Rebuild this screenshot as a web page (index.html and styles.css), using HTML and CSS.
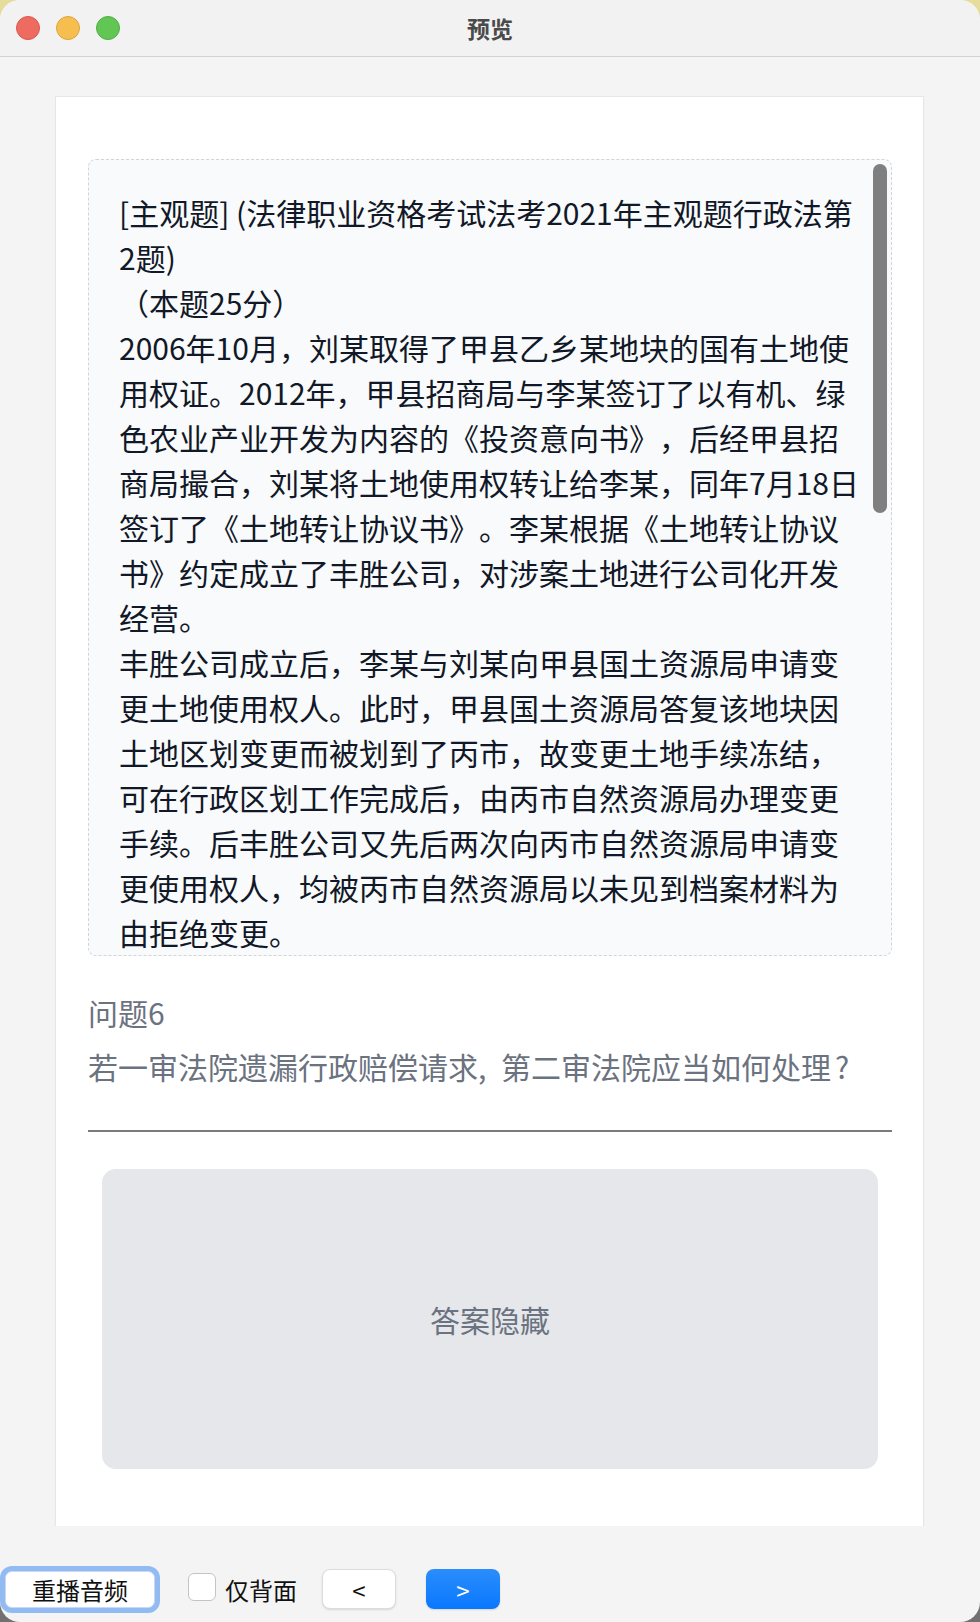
FILE: index.html
```html
<!DOCTYPE html>
<html lang="zh-CN">
<head>
<meta charset="utf-8">
<title>预览</title>
<link rel="stylesheet" href="styles.css">
</head>
<body>
<div class="window">
  <header class="titlebar">
    <div class="lights">
      <span class="light red"></span>
      <span class="light yellow"></span>
      <span class="light green"></span>
    </div>
    <div class="title">预览</div>
  </header>

  <main class="viewport">
    <article class="card">
      <section class="passage">
        <p>[主观题] (法律职业资格考试法考2021年主观题行政法第2题)</p>
        <p>（本题25分）</p>
        <p>2006年10月，刘某取得了甲县乙乡某地块的国有土地使用权证。2012年，甲县招商局与李某签订了以有机、绿色农业产业开发为内容的《投资意向书》，后经甲县招商局撮合，刘某将土地使用权转让给李某，同年7月18日签订了《土地转让协议书》。李某根据《土地转让协议书》约定成立了丰胜公司，对涉案土地进行公司化开发经营。</p>
        <p>丰胜公司成立后，李某与刘某向甲县国土资源局申请变更土地使用权人。此时，甲县国土资源局答复该地块因土地区划变更而被划到了丙市，故变更土地手续冻结，可在行政区划工作完成后，由丙市自然资源局办理变更手续。后丰胜公司又先后两次向丙市自然资源局申请变更使用权人，均被丙市自然资源局以未见到档案材料为由拒绝变更。</p>
        <div class="scroll-thumb"></div>
      </section>

      <section class="question">
        <div class="q-label">问题6</div>
        <div class="q-text">若一审法院遗漏行政赔偿请求<span class="q-punct">, </span>第二审法院应当如何处理<span class="q-mark">?</span></div>
      </section>

      <hr class="divider">

      <div class="answer-hidden">答案隐藏</div>
    </article>
  </main>

  <footer class="toolbar">
    <button class="btn btn-replay">重播音频</button>
    <label class="check">
      <span class="check-box"></span>
      <span class="check-text">仅背面</span>
    </label>
    <button class="btn btn-nav">&lt;</button>
    <button class="btn btn-nav btn-primary">&gt;</button>
  </footer>
</div>
</body>
</html>
```

FILE: styles.css
```css
* { box-sizing: border-box; }

html, body {
  margin: 0;
  padding: 0;
}

body {
  width: 980px;
  height: 1622px;
  background: linear-gradient(180deg, #e6dc9c 0%, #b9b38f 50%, #707070 100%);
  font-family: "Noto Sans CJK SC", "Noto Sans", sans-serif;
  text-spacing-trim: space-all;
  text-autospace: no-autospace;
  overflow: hidden;
}

.window {
  width: 980px;
  height: 1622px;
  background: #f4f4f4;
  border-radius: 20px;
  overflow: hidden;
  display: flex;
  flex-direction: column;
}

/* Title bar */
.titlebar {
  height: 57px;
  flex: none;
  background: #f2f2f2;
  border-bottom: 1px solid #d3d3d3;
  display: flex;
  align-items: center;
  position: relative;
}

.lights {
  display: flex;
  gap: 16px;
  padding-left: 16px;
}

.light {
  width: 24px;
  height: 24px;
  border-radius: 50%;
  display: block;
}
.light.red { background: #ee6b60; border: 1px solid #d8574d; }
.light.yellow { background: #f6be4f; border: 1px solid #dca43f; }
.light.green { background: #62c655; border: 1px solid #51ad45; }

.title {
  position: absolute;
  left: 0;
  right: 0;
  top: 0;
  bottom: 0;
  display: flex;
  align-items: center;
  justify-content: center;
  font-size: 23px;
  font-weight: 700;
  color: #4a4a4a;
  pointer-events: none;
}

/* Scroll viewport with the card */
.viewport {
  flex: none;
  height: 1469px;
  padding: 40px 57px 0 56px;
  overflow: hidden;
}

.card {
  background: #ffffff;
  min-height: 1500px;
  box-shadow: 0 0 0 1px #e6e6ea, 0 1px 3px rgba(0, 0, 0, 0.06);
  padding: 62px 31px 0 32px;
}

.passage {
  position: relative;
  height: 797px;
  overflow: hidden;
  background: #f9fafb;
  border: 1px dashed #d1d5db;
  border-radius: 8px;
  padding: 30px 28px 0 30px;
  color: #111827;
  font-size: 30px;
  line-height: 45px;
  text-spacing-trim: space-all;
  text-autospace: no-autospace;
}

.passage p {
  margin: 0;
}

.scroll-thumb {
  position: absolute;
  top: 4px;
  right: 4px;
  width: 14px;
  height: 349px;
  border-radius: 7px;
  background: #7f7f7f;
}

.question {
  margin-top: 34px;
  color: #6b7280;
  font-size: 30px;
  line-height: 45px;
}

.q-text {
  margin-top: 9px;
}

.q-punct {
  letter-spacing: 4px;
}

.q-mark {
  margin-left: 4px;
}

.divider {
  margin: 41px 0 0 0;
  border: none;
  height: 2px;
  background: #7a7a7a;
}

.answer-hidden {
  margin: 37px 14px 0 14px;
  height: 300px;
  border-radius: 14px;
  background: #e5e7eb;
  color: #6b7280;
  font-size: 30px;
  display: flex;
  align-items: center;
  justify-content: center;
}

/* Bottom toolbar */
.toolbar {
  flex: 1;
  display: flex;
  align-items: center;
  padding: 42px 0 12px 5px;
  font-family: "Noto Sans CJK SC", "Noto Sans", sans-serif;
}

.btn {
  font-family: inherit;
  font-size: 24px;
  color: #111111;
  background: #ffffff;
  border: 1px solid #d6d6d6;
  border-radius: 8px;
  padding: 0;
  display: flex;
  align-items: center;
  justify-content: center;
}

.btn-replay {
  width: 150px;
  height: 37px;
  border-radius: 7px;
  border-color: #c9d9f3;
  box-shadow: 0 0 0 5px #93bbf3;
}

.check {
  display: flex;
  align-items: center;
  margin-left: 33px;
}

.check-box {
  width: 28px;
  height: 28px;
  border-radius: 6px;
  border: 1px solid #c4c4c4;
  background: #ffffff;
  margin-top: -4px;
}

.check-text {
  margin-left: 9px;
  font-size: 24px;
  color: #111111;
}

.btn-nav {
  width: 74px;
  height: 40px;
  margin-left: 25px;
  box-shadow: 0 1px 2px rgba(0, 0, 0, 0.12);
  border-color: #dcdcdc;
}

.btn-primary {
  margin-left: 30px;
  border: none;
  color: #ffffff;
  background: linear-gradient(180deg, #2a8dfc 0%, #0a78fe 100%);
}
```
